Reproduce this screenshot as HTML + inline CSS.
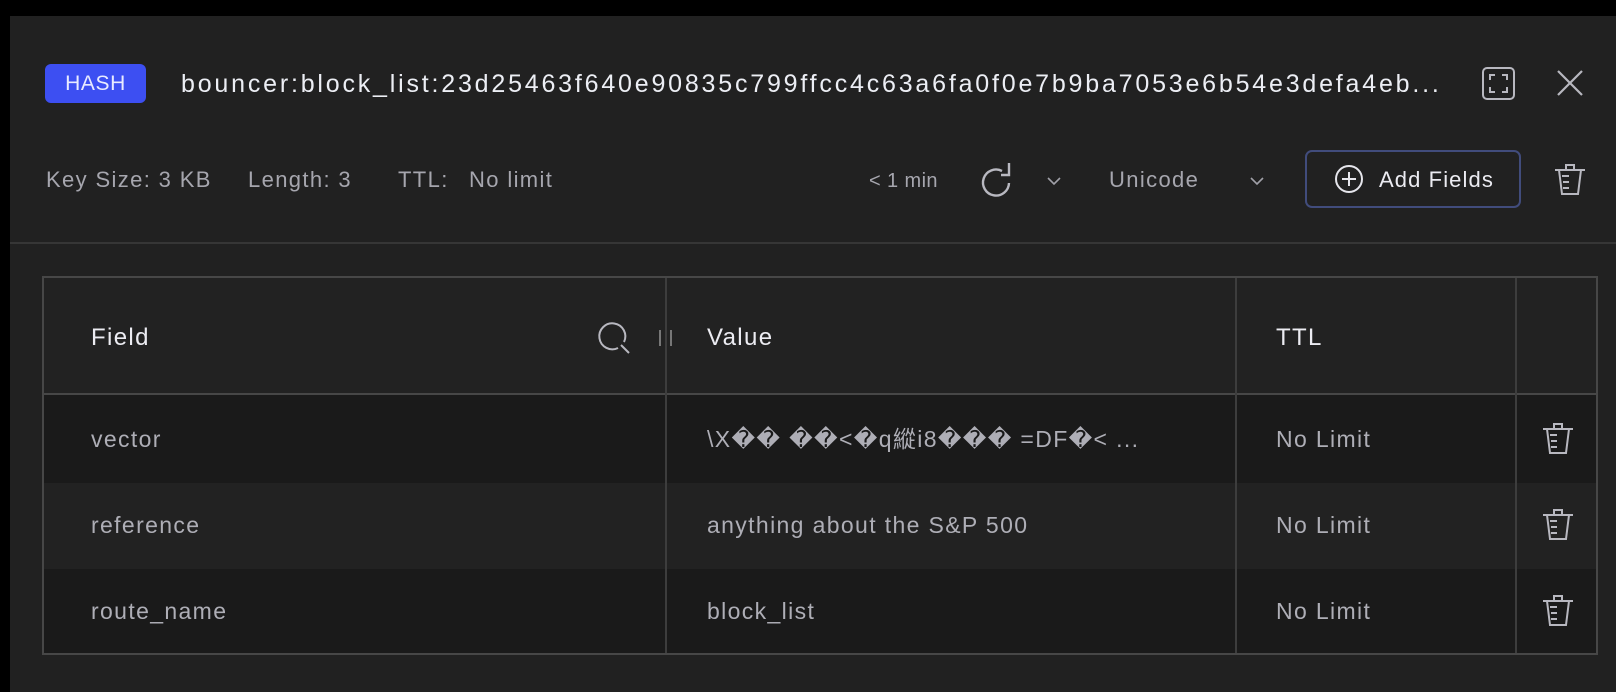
<!DOCTYPE html>
<html><head><meta charset="utf-8"><style>
*{margin:0;padding:0;box-sizing:border-box}
body{width:1616px;height:692px;background:#000;font-family:"Liberation Sans","Noto Sans CJK SC",sans-serif;position:relative;overflow:hidden;letter-spacing:0.085em}
.panel{position:absolute;left:10px;top:16px;width:1606px;height:676px;background:#212121}
.a{position:absolute;white-space:nowrap}
.badge{left:45px;top:64px;width:101px;height:39px;background:#3d4ff2;border-radius:6px;color:#e8eaff;font-size:21px;line-height:39px;text-align:center;letter-spacing:0.03em}
.title{left:181px;top:69px;font-size:25px;color:#eceef4;line-height:30px;letter-spacing:2.8px}
.info{top:167px;font-size:22px;color:#a6a6ae;line-height:26px}
.btn{left:1305px;top:150px;width:216px;height:58px;border:2px solid #414c7c;border-radius:7px}
.div{position:absolute;left:10px;top:242px;width:1606px;height:2px;background:#363636}
.tbl{position:absolute;left:42px;top:276px;width:1556px;height:379px;border:2px solid #474747;background:#1a1a1a}
.hdr{position:absolute;left:0;top:0;width:100%;height:117px;background:#222;border-bottom:2px solid #474747}
.r2{position:absolute;left:0;top:205px;width:100%;height:86px;background:#222}
.vl{position:absolute;top:0;width:2px;height:100%;background:#3d3d3d}
.h{font-size:24px;color:#ececf2;line-height:28px}
.c{font-size:23px;color:#aeaeb6;line-height:28px}
</style></head><body>
<div class="panel"></div>
<div class="a badge">HASH</div>
<div class="a title">bouncer:block_list:23d25463f640e90835c799ffcc4c63a6fa0f0e7b9ba7053e6b54e3defa4eb...</div>
<svg class="a" style="left:1482px;top:67px" width="33" height="33" viewBox="0 0 33 33" fill="none" stroke="#b8b8c0" stroke-width="2"><rect x="1" y="1" width="31" height="31" rx="4"/><path d="M8 13V8h5M20 8h5v5M25 20v5h-5M13 25H8v-5"/></svg>
<svg class="a" style="left:1556px;top:69px" width="28" height="28" viewBox="0 0 28 28" stroke="#b8b8c0" stroke-width="2.2"><path d="M2 2L26 26M26 2L2 26"/></svg>
<div class="a info" style="left:46px">Key Size: 3 KB</div>
<div class="a info" style="left:248px">Length: 3</div>
<div class="a info" style="left:398px">TTL:</div>
<div class="a info" style="left:469px">No limit</div>
<div class="a info" style="left:869px;font-size:20px;letter-spacing:0.02em;top:168px">&lt; 1 min</div>
<svg class="a" style="left:980px;top:160px" width="36" height="40" viewBox="0 0 36 40" fill="none" stroke="#b8b8c0" stroke-width="2.4"><path d="M22 11A13 13 0 1 0 29 23"/><path d="M21 15H29V3"/></svg>
<svg class="a" style="left:1046px;top:176px" width="16" height="10" viewBox="0 0 16 10" fill="none" stroke="#a0a0a8" stroke-width="1.6"><path d="M2 2l6 6 6-6"/></svg>
<div class="a info" style="left:1109px">Unicode</div>
<svg class="a" style="left:1249px;top:176px" width="16" height="10" viewBox="0 0 16 10" fill="none" stroke="#a0a0a8" stroke-width="1.6"><path d="M2 2l6 6 6-6"/></svg>
<div class="a btn"></div>
<svg class="a" style="left:1334px;top:164px" width="30" height="30" viewBox="0 0 30 30" fill="none" stroke="#e6e6ec" stroke-width="2"><circle cx="15" cy="15" r="13"/><path d="M15 8v14M8 15h14"/></svg>
<div class="a" style="left:1379px;top:166px;font-size:22px;color:#ececf2;line-height:28px;letter-spacing:0.05em">Add Fields</div>
<svg class="a" style="left:1554px;top:163px" width="32" height="33" viewBox="0 0 32 33" fill="none" stroke="#b8b8c0" stroke-width="2"><path d="M1 7h30M12 7V2h8v5M5 7l3 24h16l3-24M8 13h7M9 19h6M9 25h6"/></svg>
<div class="div"></div>
<div class="tbl">
 <div class="hdr"></div>
 <div class="r2"></div>
 <div class="vl" style="left:621px"></div>
 <div class="vl" style="left:1191px"></div>
 <div class="vl" style="left:1471px"></div>
 <div class="a h" style="left:47px;top:46px">Field</div>
 <div class="a h" style="left:663px;top:46px">Value</div>
 <div class="a h" style="left:1232px;top:46px">TTL</div>
 <svg class="a" style="left:551px;top:40px" width="38" height="38" viewBox="0 0 38 38" fill="none" stroke="#b8b8c0" stroke-width="2"><path d="M23 30A13 13 0 1 1 29 24M26 27l8 8"/></svg>
 <div class="a" style="left:615px;top:52px;width:2px;height:16px;background:#777"></div>
 <div class="a" style="left:626px;top:52px;width:2px;height:16px;background:#777"></div>
 <div class="a c" style="left:47px;top:147px">vector</div>
 <div class="a c" style="left:663px;top:147px">\X�� ��&lt;�q縱i8��� =DF�&lt; ...</div>
 <div class="a c" style="left:1232px;top:147px">No Limit</div>
 <div class="a c" style="left:47px;top:233px">reference</div>
 <div class="a c" style="left:663px;top:233px">anything about the S&amp;P 500</div>
 <div class="a c" style="left:1232px;top:233px">No Limit</div>
 <div class="a c" style="left:47px;top:319px">route_name</div>
 <div class="a c" style="left:663px;top:319px">block_list</div>
 <div class="a c" style="left:1232px;top:319px">No Limit</div>
 <svg class="a" style="left:1497px;top:144px" width="34" height="33" viewBox="0 0 32 33" fill="none" stroke="#b8b8c0" stroke-width="2"><path d="M1 7h30M12 7V2h8v5M5 7l3 24h16l3-24M8 13h7M9 19h6M9 25h6"/></svg>
 <svg class="a" style="left:1497px;top:230px" width="34" height="33" viewBox="0 0 32 33" fill="none" stroke="#b8b8c0" stroke-width="2"><path d="M1 7h30M12 7V2h8v5M5 7l3 24h16l3-24M8 13h7M9 19h6M9 25h6"/></svg>
 <svg class="a" style="left:1497px;top:316px" width="34" height="33" viewBox="0 0 32 33" fill="none" stroke="#b8b8c0" stroke-width="2"><path d="M1 7h30M12 7V2h8v5M5 7l3 24h16l3-24M8 13h7M9 19h6M9 25h6"/></svg>
</div>
</body></html>
